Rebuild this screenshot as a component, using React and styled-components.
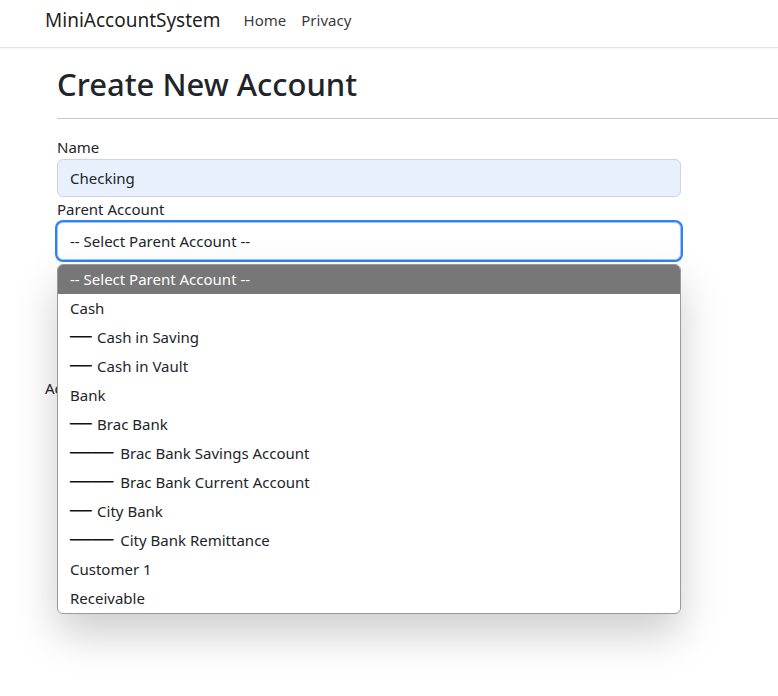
import React from "react";
import styled, { createGlobalStyle } from "styled-components";

const GlobalStyle = createGlobalStyle`
  html, body {
    margin: 0;
    padding: 0;
    background: #fff;
    color: #212529;
    font-family: "Segoe UI", "Noto Sans", "Open Sans", sans-serif;
    font-size: 16px;
  }
  * { box-sizing: border-box; }
`;

const accounts = [
  { name: "Cash", level: 0 },
  { name: "Cash in Saving", level: 1 },
  { name: "Cash in Vault", level: 1 },
  { name: "Bank", level: 0 },
  { name: "Brac Bank", level: 1 },
  { name: "Brac Bank Savings Account", level: 2 },
  { name: "Brac Bank Current Account", level: 2 },
  { name: "City Bank", level: 1 },
  { name: "City Bank Remittance", level: 2 },
  { name: "Customer 1", level: 0 },
  { name: "Receivable", level: 0 },
];

function App() {
  return (
    <Page>
      <GlobalStyle />
      <Navbar>
        <Brand>MiniAccountSystem</Brand>
        <NavLinks>
          <NavLink>Home</NavLink>
          <NavLink>Privacy</NavLink>
        </NavLinks>
      </Navbar>
      <Main>
        <Form>
          <Title>Create New Account</Title>
          <Divider />
          <Field>
            <Label>Name</Label>
            <Input $autofill>Checking</Input>
          </Field>
          <Field>
            <Label>Parent Account</Label>
            <SelectWrap>
              <Input $focused>-- Select Parent Account --</Input>
              <Dropdown>
                <Option $selected>-- Select Parent Account --</Option>
                {accounts.map((a) => (
                  <Option key={a.name}>
                    {a.level > 0 && <Dash $level={a.level}>{"─".repeat(a.level * 2)}</Dash>}
                    {a.level > 0 && " "}
                    {a.name}
                  </Option>
                ))}
              </Dropdown>
            </SelectWrap>
          </Field>
          <Field $gap={28}>
            <Input>Asset</Input>
          </Field>
          <SubmitButton>Create</SubmitButton>
        </Form>
        <BackLink>Account List</BackLink>
      </Main>
    </Page>
  );
}

const Page = styled.div`
  min-height: 696px;
  position: relative;
`;

const Navbar = styled.nav`
  display: flex;
  align-items: center;
  height: 48px;
  padding: 0 0 7px 45px;
  border-bottom: 1px solid #e3e3e3;
  box-shadow: 0 1px 3px rgba(0, 0, 0, 0.04);
`;

const Brand = styled.a`
  font-size: 19px;
  color: rgba(0, 0, 0, 0.9);
  margin-right: 23px;
`;

const NavLinks = styled.div`
  display: flex;
  gap: 15px;
`;

const NavLink = styled.a`
  font-size: 15px;
  color: rgba(0, 0, 0, 0.8);
`;

const Main = styled.main`
  padding: 16px 0 0 45px;
`;

const Form = styled.div`
  padding-left: 12px;
`;

const Title = styled.h1`
  margin: 0 0 14px;
  font-size: 31px;
  line-height: 40px;
  font-weight: 500;
  color: #212529;
`;

const Divider = styled.hr`
  margin: 0 0 16px;
  border: 0;
  border-top: 1px solid #c8c8c8;
`;

const Field = styled.div`
  width: 624px;
  margin-top: ${(p) => (p.$gap ? `${p.$gap}px` : "0")};
`;

const Label = styled.div`
  line-height: 24px;
  height: 24px;
  font-size: 15px;
`;

const SelectWrap = styled.div`
  position: relative;
`;

const Input = styled.div`
  height: 38px;
  padding: 0 12px;
  display: flex;
  align-items: center;
  border-radius: 6px;
  border: 1px solid ${(p) => (p.$focused ? "#9ec5fe" : "#ced4da")};
  background: ${(p) => (p.$autofill ? "#e8f0fe" : "#fff")};
  box-shadow: ${(p) => (p.$focused ? "0 0 0 2px #2e83ec" : "none")};
  margin-top: ${(p) => (p.$focused ? "1px" : "0")};
  font-size: 15px;
`;

const Dropdown = styled.div`
  position: absolute;
  top: calc(100% + 4px);
  left: 0;
  width: 624px;
  background: #fff;
  border: 1px solid #9a9a9a;
  border-radius: 6px;
  overflow: hidden;
  box-shadow: 0 20px 44px rgba(0, 0, 0, 0.2);
  z-index: 10;
`;

const Option = styled.div`
  height: 29px;
  line-height: 29px;
  padding-left: 12px;
  font-size: 15px;
  white-space: pre;
  background: ${(p) => (p.$selected ? "#777777" : "transparent")};
  color: ${(p) => (p.$selected ? "#fff" : "#212529")};
`;

const Dash = styled.span`
  font-family: "DejaVu Sans", sans-serif;
  font-size: 18px;
  line-height: 1;
  font-weight: 700;
  color: #111;
  margin-right: ${(p) => p.$level * 1.5}px;
`;

const SubmitButton = styled.button`
  display: block;
  margin-top: 6px;
  height: 38px;
  padding: 0 12px;
  border: 1px solid #0d6efd;
  border-radius: 6px;
  background: #0d6efd;
  color: #fff;
  font: inherit;
`;

const BackLink = styled.div`
  margin-top: 6px;
  line-height: 24px;
  font-size: 15px;
`;

export default App;
